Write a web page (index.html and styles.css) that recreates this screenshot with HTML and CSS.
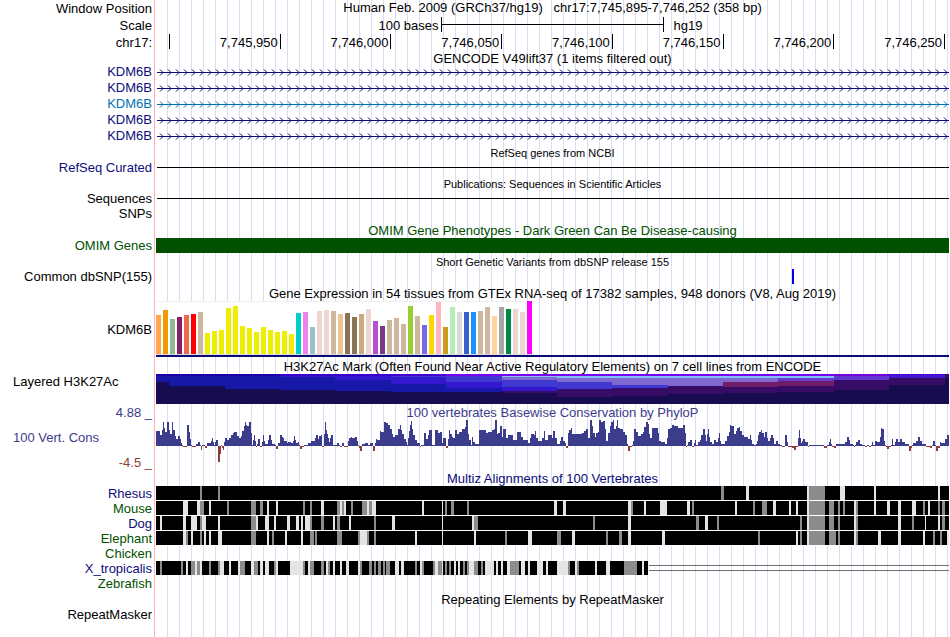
FILE: index.html
```
<!DOCTYPE html>
<html lang="en">
<head>
  <meta charset="UTF-8" />
  <meta name="viewport" content="width=device-width, initial-scale=1.0"/>
  <title>Genome Browser - chr17:7,745,895-7,746,252</title>
  <link rel="stylesheet" href="styles.css">
</head>
<body>
  <main class="browser">
    <section class="track ruler">
      <div class="label">Window Position</div>
      <div class="position">Human Feb. 2009 (GRCh37/hg19) &nbsp; chr17:7,745,895-7,746,252 (358 bp)</div>
      <div class="label">Scale</div>
      <div class="scale">
        <span class="scale-text">100 bases</span>
        <span class="scale-bar"><i></i></span>
        <span class="scale-db">hg19</span>
      </div>
      <div class="label">chr17:</div>
      <div class="ticks">
        <span></span>
        <span>7,745,950</span>
        <span>7,746,000</span>
        <span>7,746,050</span>
        <span>7,746,100</span>
        <span>7,746,150</span>
        <span>7,746,200</span>
        <span>7,746,250</span>
      </div>
    </section>

    <section class="track genes">
      <h2 class="title">GENCODE V49lift37 (1 items filtered out)</h2>
      <div class="label navy">KDM6B</div>
      <svg class="gene navy"></svg>
      <div class="label navy">KDM6B</div>
      <svg class="gene navy"></svg>
      <div class="label blue">KDM6B</div>
      <svg class="gene blue"></svg>
      <div class="label navy">KDM6B</div>
      <svg class="gene navy"></svg>
      <div class="label navy">KDM6B</div>
      <svg class="gene navy"></svg>
    </section>

    <section class="track">
      <h2 class="title small">RefSeq genes from NCBI</h2>
      <div class="label navy">RefSeq Curated</div>
      <div class="line"></div>
    </section>

    <section class="track">
      <h2 class="title small">Publications: Sequences in Scientific Articles</h2>
      <div class="label">Sequences</div>
      <div class="line"></div>
      <div class="label tall">SNPs</div>
    </section>

    <section class="track">
      <h2 class="title green">OMIM Gene Phenotypes - Dark Green Can Be Disease-causing</h2>
      <div class="label green">OMIM Genes</div>
      <div class="omim"></div>
    </section>

    <section class="track">
      <h2 class="title small">Short Genetic Variants from dbSNP release 155</h2>
      <div class="label tall">Common dbSNP(155)</div>
      <svg class="snp" viewBox="0 0 793 16" preserveAspectRatio="none"><rect x="636" width="2" height="15" /></svg>
    </section>

    <section class="track">
      <h2 class="title">Gene Expression in 54 tissues from GTEx RNA-seq of 17382 samples, 948 donors (V8, Aug 2019)</h2>
      <div class="label middle">KDM6B</div>
      <div class="gtex">
        <div class="gtex-bars" id="gtex"></div>
      </div>
    </section>

    <section class="track">
      <h2 class="title">H3K27Ac Mark (Often Found Near Active Regulatory Elements) on 7 cell lines from ENCODE</h2>
      <div class="label left">Layered H3K27Ac</div>
      <svg class="h3k" id="h3k" viewBox="0 0 793 30" preserveAspectRatio="none"></svg>
    </section>

    <section class="track">
      <div class="range">
        <div class="label slate">4.88 _</div>
        <div class="label left slate">100 Vert. Cons</div>
        <div class="label maroon">-4.5 _</div>
      </div>
      <h2 class="title slate">100 vertebrates Basewise Conservation by PhyloP</h2>
      <svg class="phylop" id="phylop" viewBox="0 0 2379 50" preserveAspectRatio="none"></svg>
    </section>

    <section class="track">
      <h2 class="title navy">Multiz Alignments of 100 Vertebrates</h2>
      <div class="label navy">Rhesus</div>
      <svg class="align" data-species="rhesus"></svg>
      <div class="label green">Mouse</div>
      <svg class="align" data-species="mouse"></svg>
      <div class="label navy">Dog</div>
      <svg class="align" data-species="dog"></svg>
      <div class="label green">Elephant</div>
      <svg class="align" data-species="elephant"></svg>
      <div class="label green">Chicken</div>
      <div class="label navy">X_tropicalis</div>
      <svg class="align" data-species="xtropicalis"></svg>
      <div class="label green">Zebrafish</div>
    </section>

    <section class="track">
      <h2 class="title">Repeating Elements by RepeatMasker</h2>
      <div class="label">RepeatMasker</div>
    </section>
  </main>

  <script src="tracks.js"></script>
</body>
</html>
```
FILE: styles.css
```
* {
  box-sizing: border-box;
}
body {
  margin: 0;
  background: #ffffff;
  color: #000000;
  font-family: "Liberation Sans", Arial, Helvetica, sans-serif;
  font-size: 13px;
  line-height: 15px;
}
.browser {
  min-height: 100vh;
  padding-right: 1px;
  background:
    linear-gradient(#ffb0b0, #ffb0b0) 154px 0 / 1px 100% no-repeat,
    repeating-linear-gradient(to right, #dcdcf5 0 1px, transparent 1px 12px) 167px 0 no-repeat;
}
.track {
  display: grid;
  grid-template-columns: 152px minmax(0, 1fr);
  column-gap: 4px;
}
.title {
  grid-column: 2;
  height: 16px;
  margin: 0;
  font-size: 13px;
  font-weight: normal;
  line-height: 17px;
  text-align: center;
  white-space: nowrap;
}
.title.small {
  font-size: 11px;
  line-height: 19px;
}
.label {
  grid-column: 1;
  text-align: right;
  white-space: nowrap;
}
.label.tall { line-height: 16px; }
.label.middle { align-self: center; }
.label.left { text-align: left; padding-left: 13px; }
.navy { color: #0c0c78; }
.blue { color: #0072b2; }
.green { color: #005000; }
.slate { color: #3c3c8c; }
.maroon { color: #8c3c3c; }
svg {
  display: block;
  width: 100%;
  shape-rendering: crispEdges;
}

/* position, scale and coordinates */
.ruler {
  grid-template-rows: 17px 17px 16px;
  line-height: 17px;
}
.position {
  text-align: center;
  line-height: 16px;
  white-space: nowrap;
}
.scale {
  display: flex;
}
.scale-text {
  width: 36%;
  padding-right: 3px;
  text-align: right;
}
.scale-bar {
  display: flex;
  align-items: center;
  width: 28%;
  height: 15px;
  border-left: 1px solid #000;
  border-right: 1px solid #000;
}
.scale-bar i {
  flex: 1;
  height: 1px;
  background: #000;
}
.scale-db { padding-left: 10px; }
.ticks {
  display: grid;
  grid-template-columns: 14px repeat(7, 1fr);
  height: 16px;
  padding-right: 4px;
}
.ticks span {
  height: 15px;
  padding-right: 2px;
  border-right: 1px solid #000;
  text-align: right;
}

/* genes */
.genes { line-height: 16px; }
.genes .title { height: 14px; }
.gene { height: 16px; }
.gene rect { fill: currentColor; }
.gene path {
  fill: none;
  stroke: currentColor;
  shape-rendering: auto;
}
.line {
  height: 1px;
  margin: 7px 0 0 1px;
  background: #000;
}
.omim {
  height: 15px;
  background: #005000;
}
.snp {
  height: 16px;
  fill: #0000e0;
}

/* expression bars */
.gtex {
  height: 57px;
}
.gtex-bars {
  display: flex;
  align-items: flex-end;
  gap: 2px;
  width: 378px;
  height: 54px;
  background: #fff;
  border-bottom: 1px solid #dcdcdc;
  box-shadow: inset 0 1px #f0f0f0;
}
.gtex-bars i { width: 5px; }
.gtex::after {
  content: "";
  display: block;
  height: 2px;
  background: #0c0c78;
}
.h3k { height: 30px; }

/* conservation */
.range {
  display: flex;
  flex-direction: column;
  grid-row: 1 / 3;
  gap: 8px;
  height: 66px;
  line-height: 17px;
}
.phylop { height: 50px; }
.align { height: 15px; }
```
FILE: tracks.js
```
const NS = "http://www.w3.org/2000/svg";

function rect(svg, x, y, w, h, fill) {
  const r = document.createElementNS(NS, "rect");
  r.setAttribute("x", x);
  r.setAttribute("y", y);
  r.setAttribute("width", w);
  r.setAttribute("height", h);
  r.setAttribute("fill", fill);
  svg.appendChild(r);
}

// gene introns: a line with strand arrows every 8px
function drawGenes() {
  document.querySelectorAll(".gene").forEach(svg => {
    const width = svg.getBoundingClientRect().width;
    let d = "";
    for (let x = 4; x < width; x += 8) d += `M${x} 5.5l3 3l-3 3`;
    svg.innerHTML = `<rect x="1" y="8" width="${width - 1}" height="1" /><path d="${d}" />`;
  });
}
drawGenes();
window.addEventListener("resize", drawGenes);

// GTEx median expression per tissue
const brain = [21, 23, 24, 46, 48, 28, 26, 22, 27, 24, 22, 23, 20].map(h => [h, "#eeee00"]);
const tissues = [
  [39, "#ffa54f"], [44, "#ee9a00"], [35, "#8fbc8f"], [37, "#8b1c62"], [39, "#ee6a50"],
  [40, "#ff0000"], [42, "#cdb79e"], ...brain, [41, "#00cdcd"], [42, "#ee82ee"],
  [27, "#9ac0cd"], [43, "#eed5d2"], [44, "#eed5d2"], [43, "#cdb79e"], [40, "#eec591"],
  [41, "#8b7355"], [37, "#8b7355"], [40, "#cdaa7d"], [45, "#eed5d2"], [33, "#b452cd"],
  [28, "#7a378b"], [34, "#cdb79e"], [36, "#cdb79e"], [30, "#cdb79e"], [48, "#9acd32"],
  [38, "#cdb79e"], [29, "#7a67ee"], [39, "#ffd700"], [52, "#ffb6c1"], [27, "#cd9b1d"],
  [47, "#b4eeb4"], [42, "#d9d9d9"], [42, "#3a5fcd"], [42, "#1e90ff"], [43, "#cdb79e"],
  [47, "#cdb79e"], [38, "#ffd39b"], [47, "#a6a6a6"], [45, "#008b45"], [45, "#eed5d2"],
  [42, "#eed5d2"], [53, "#ff00ff"]
];
const gtex = document.getElementById("gtex");
tissues.forEach(([h, color]) => {
  const bar = document.createElement("i");
  bar.style.height = h + "px";
  bar.style.background = color;
  gtex.appendChild(bar);
});

// H3K27Ac layers: start of the bin, then [bottom of layer, colour] from the top down
const dark = "#180c50", blue = "#1818a8", indigo = "#3418d0", royal = "#4038d0";
const plum = "#360c66", lilac = "#8068d0", sky = "#80c0f8", wine = "#701c68", violet = "#7a00f0";
const bins = [
  [0, [2, "#1e00a8"], [8, blue]],
  [13, [2, "#1e00a8"], [12, blue]],
  [69, [2, "#1e00a8"], [15, blue]],
  [124, [2, "#3800c8"], [3, indigo], [16, blue]],
  [179, [2, "#3800c8"], [6, indigo], [17, blue]],
  [235, [2, "#4800d0"], [3, royal], [10, indigo], [18, blue]],
  [290, [2, violet], [8, royal], [14, indigo], [18, blue]],
  [346, [2, violet], [3, sky], [6, lilac], [13, royal], [17, indigo], [19, plum]],
  [401, [2, violet], [4, sky], [8, lilac], [15, royal], [23, plum]],
  [456, [2, violet], [4, sky], [11, lilac], [14, royal], [22, plum]],
  [512, [2, violet], [4, sky], [12, lilac], [20, plum]],
  [567, [2, violet], [4, sky], [8, lilac], [13, wine], [19, plum]],
  [622, [2, violet], [4, sky], [7, "#6838d0"], [12, wine], [18, plum]],
  [678, [2, "#7800d8"], [6, "#6038d0"], [16, plum]],
  [733, [1, "#5000d8"], [4, "#4018d0"], [11, plum]],
  [789, [4, plum]]
];
const h3k = document.getElementById("h3k");
bins.forEach(([x, ...layers], i) => {
  const w = (bins[i + 1] ? bins[i + 1][0] : 793) - x;
  rect(h3k, x, 0, w, 30, dark);
  let top = 0;
  layers.forEach(([bottom, color]) => {
    rect(h3k, x, top, w, bottom - top, color);
    top = bottom;
  });
});

// PhyloP scores, three blocks of "end:score"; x is in thirds of a pixel
const phyloBlocks = [
  [-18, 18, "30:15 36:11 39:16 42:24 45:18 51:14 57:24 60:16 66:12 69:24 75:16 78:10 84:7 89:10 92:7 96:3 99:1 110:-1 111:4 117:21 120:14 123:7 126:1 138:-1 144:2 150:4 152:1 157:-4 162:1 164:1 170:-2 183:3 186:5 189:8 192:4 195:1 198:4 204:6 210:-16 213:-8 216:1 219:-2 222:-4 225:4 230:8 236:6 243:8 249:11 252:13 262:14 268:10 273:8 277:10 282:15 285:20 288:24 291:21 297:20 303:24 306:13 309:1 312:6 315:11 318:5 321:-1 324:2 330:7 336:-1 339:4 342:11 345:5 354:2 357:6 363:11 366:6 375:2 378:1 383:-3 390:3 396:11 399:9 402:8 411:5 414:3 423:4 429:3 432:5 435:10 438:6 444:3 447:4 450:1 456:-3 462:-1 474:1 483:3 495:5 498:8 504:11 507:7 513:10 516:11 522:-1 525:12 528:24 531:16 534:12 537:8 540:4 543:8 549:11 561:1 567:3 570:1 576:-1 582:3 594:-1 597:5 603:8 606:9 615:8 621:9 624:5 627:1 630:-2 636:-5 645:2 654:3 660:1 668:3 675:-5 679:3 682:7 690:6 693:15 702:14 708:24 714:23 720:21 726:17 729:12 735:9 744:11 750:17 753:21 756:16 762:12 768:7 771:4 774:1 777:8 780:15 783:21 786:25 789:17 795:11 801:6 810:3"],
  [792, 0, "3:-1 12:1 18:13 24:7 27:11 36:16 40:1 45:1 54:16 60:13 66:14 69:3 77:8 84:-2 87:7 90:16 96:12 99:9 105:8 111:16 117:12 126:14 135:17 138:19 144:26 147:12 153:6 156:1 159:9 165:4 177:2 198:16 204:13 216:14 222:16 225:17 231:26 234:12 240:13 246:20 249:9 258:17 264:8 279:11 291:6 303:14 309:9 324:6 330:3 333:8 342:12 345:11 348:15 354:8 366:5 372:8 375:15 384:6 396:11 399:8 405:15 411:8 420:2 423:5 429:9 435:5 438:3 444:-2 447:13 453:16 456:18 468:12 486:12 492:13 498:15 504:17 510:8 516:26 519:20 525:13 528:9 534:13 537:14 543:26 549:24 555:25 558:17 564:5 570:13 573:20 579:24 582:26 588:17 591:20 594:26 600:18 609:17 615:14 621:11 624:2 630:-5 636:-1 639:1 642:5 648:17 654:14 663:10 669:12 672:14 678:19 684:24 687:22 690:12 696:8 714:18 717:13 723:5 735:4 741:2 744:8 750:17 756:18 762:21 774:20 780:18"],
  [1572, 0, "9:18 15:21 18:13 21:-1 24:1 30:4 36:6 42:-1 45:3 48:6 54:1 60:4 63:6 69:11 75:17 78:11 81:5 84:12 87:17 90:9 96:4 102:2 108:6 114:4 117:8 120:13 123:5 135:2 141:5 147:10 150:14 153:21 162:20 168:12 171:15 177:18 180:19 186:15 192:11 204:9 210:7 213:11 216:6 222:2 228:1 231:2 234:5 237:11 243:14 246:16 252:13 255:9 261:14 264:8 270:5 273:8 279:11 282:8 288:2 294:5 300:2 306:1 315:-1 321:11 324:4 336:-1 342:-2 348:-4 354:-1 357:8 360:16 363:8 366:3 369:5 375:7 384:4 387:-1 432:1 441:-2 447:1 450:4 453:7 456:2 462:-1 468:-2 495:2 501:4 507:9 510:6 519:2 522:1 525:-1 528:1 534:4 540:6 546:2 555:1 561:-1 567:1 573:-1 576:1 579:4 585:1 591:5 600:4 603:9 606:18 612:17 615:5 618:1 621:-1 627:-3 633:-1 636:1 639:7 645:1 648:4 654:7 660:4 666:7 675:4 687:2 693:-5 696:-2 700:1 708:3 714:5 720:9 726:5 738:2 750:-1 756:-2 759:1 765:5 768:1 774:-5 780:-2 783:4 795:3 800:7 807:11"]
];
const phylop = document.getElementById("phylop");
phyloBlocks.forEach(([offset, start, steps]) => {
  let x = start;
  steps.split(" ").forEach(step => {
    const [end, score] = step.split(":").map(Number);
    if (score > 0) rect(phylop, offset + x, 26 - score, end - x, score, "#3c3c8c");
    else rect(phylop, offset + x, 26, end - x, -score, "#8c3c3c");
    x = end;
  });
});

// alignment quality: w = no match, g = partial match, everything else is a full match
const offsets = [-18, 792, 1572];
const alignments = {
  rhesus: [
    "g150-156 g204-210",
    "",
    "g123-132 w198-207 w381-387 g387-435 w480-495 w582-588 w774-780"
  ],
  mouse: [
    "w99-114 w141-150 g150-162 w177-183 g231-237 g303-318 g330-339 w351-357 w378-384 g459-465 g480-486 w513-522 g561-570 w570-576 g576-582 w582-588 g603-609 g636-651 w651-657 g657-666 w666-678",
    "w6-12 w66-69 g75-81 g93-102 g141-147 w402-411 w429-438 w624-633 g633-639 w672-678 w720-741",
    "w21-30 g36-42 w165-171 g219-225 g246-261 w279-288 w327-333 w348-354 w381-387 g387-435 g447-462 g474-480 g489-495 w522-528 g528-534 w582-588 w621-630 w654-663 w696-708 g729-735 w744-750 g774-780 g786-795"
  ],
  dog: [
    "w30-36 w99-108 w123-141 g150-156 w156-168 w204-210 g303-318 w318-324 w345-357 w372-378 w411-420 w438-447 w453-459 w465-480 g480-486 g513-522 w549-555 g561-570 w597-603 g672-678 w726-735",
    "w66-69 w156-162 g162-174 g519-525 w624-633",
    "g48-57 w75-84 g111-117 g360-366 w381-387 g387-435 g447-462 g474-480 w522-528 g528-534 w654-663 g696-702 w735-738 w774-780 g786-795"
  ],
  elephant: [
    "w99-108 g108-114 w123-129 g150-156 w162-168 w177-183 w204-216 g303-318 w351-357 g366-372 w405-411 w453-459 g480-492 g495-501 g561-576 g624-630 w630-651 g651-657 g672-678 w795-801",
    "w66-69 w162-168 g255-261 w324-336 g411-423 w456-465 g558-564 g597-606 w624-633 w726-735",
    "g234-240 w348-354 g360-366 w381-387 g387-435 g447-468 g474-480 w522-528 g528-534 w594-603 w654-663 w729-735 g759-765 g780-786 w801-807"
  ],
  xtropicalis: [
    "g30-36 g93-99 w108-114 g123-135 w135-141 g141-150 w150-156 g177-183 g204-210 w210-222 w237-243 w264-270 g270-285 w303-312 g312-324 w330-339 w345-357 g372-378 w378-384 w420-459 g459-465 w474-480 g480-492 g513-522 w528-534 g534-540 w549-555 w570-576 w588-597 w624-630 g630-636 g657-666 g672-678 g684-693 g699-705 g708-720 w735-747 w753-762 g795-801",
    "w0-6 g6-12 g39-45 w45-54 g54-66 w66-69 g75-81 g87-93 w102-108 w114-120 g129-135 g141-147 w147-162 g162-174 g183-189 w195-222 w228-234 w243-249 w261-270 g270-297 w303-315 w324-330 w351-369 w378-384 w411-444 g444-450 w465-471 g471-477 w525-531 w558-570 g612-651 w666-672",
    ""
  ]
};
document.querySelectorAll(".align").forEach(svg => {
  const name = svg.dataset.species;
  const end = name === "xtropicalis" ? 1476 : 2379;
  svg.setAttribute("viewBox", "0 0 2379 15");
  svg.setAttribute("preserveAspectRatio", "none");
  rect(svg, 0, 0, 2379, 15, end < 2379 ? "none" : "#fff");
  rect(svg, 0, 0, end, 14, "#000");
  alignments[name].forEach((block, i) => {
    block.split(" ").filter(Boolean).forEach(run => {
      const [from, to] = run.slice(1).split("-").map(Number);
      rect(svg, offsets[i] + from, 0, to - from, 14, run[0] === "w" ? "#e4e4e4" : "#8c8c8c");
    });
  });
  // unaligned bases
  if (end < 2379) {
    rect(svg, end + 3, 4, 2379 - end, 1, "#707070");
    rect(svg, end + 3, 9, 2379 - end, 1, "#707070");
  }
});
```
